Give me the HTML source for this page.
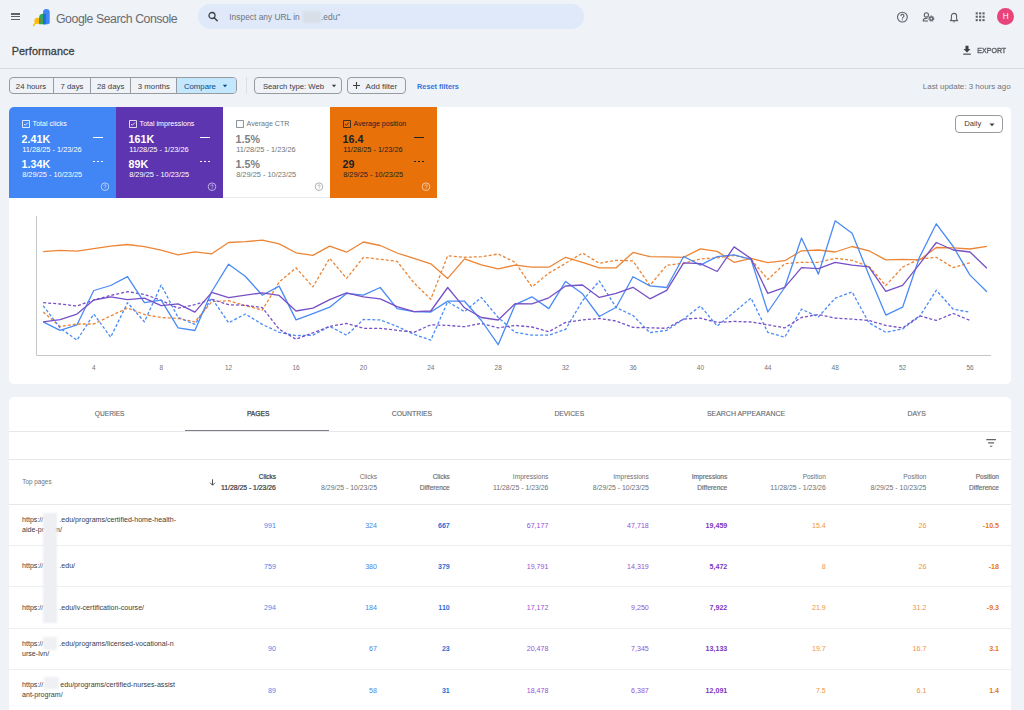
<!DOCTYPE html>
<html><head><meta charset="utf-8">
<style>
*{box-sizing:border-box;margin:0;padding:0}
html,body{width:1024px;height:710px;overflow:hidden;background:#eff2f7;font-family:"Liberation Sans",sans-serif;color:#3c4043}
.a{position:absolute;white-space:nowrap;line-height:10px}
.r{text-align:right}
.c{text-align:center}
</style></head><body>
<!-- HEADER -->
<div class="a" style="left:10.8px;top:13.2px;width:9.6px;height:8px">
 <div style="position:absolute;left:0;top:0.2px;width:9.6px;height:1.2px;background:#5f6368"></div>
 <div style="position:absolute;left:0;top:3.1px;width:9.6px;height:1.2px;background:#5f6368"></div>
 <div style="position:absolute;left:0;top:6px;width:9.6px;height:1.2px;background:#5f6368"></div>
</div>
<svg class="a" style="left:0;top:0" width="60" height="35" viewBox="0 0 60 35">
 <defs><clipPath id="gc"><rect x="39.1" y="10" width="10" height="20"/></clipPath></defs>
 <path d="M35.3,23.1 L33.6,25.7" stroke="#fbbc04" stroke-width="1.4" stroke-linecap="round"/>
 <circle cx="37.5" cy="20.8" r="3.1" fill="#fbbc04"/>
 <path d="M43.1,24.2 V12.4 A3.3,3.3 0 0 1 49.7,12.4 V22.2 A2,2 0 0 1 47.7,24.2 Z" fill="#4285f4"/>
 <path d="M39.1,23.9 V17.8 A4,4 0 0 1 43.1,13.8 H45.8 V24.2 H39.1 Z" fill="#34a853"/>
 <path d="M43.1,13.8 H45.8 V24.2 H43.1 Z" fill="#1a6fd8"/>
 <circle cx="37.5" cy="20.8" r="3.1" fill="#ea4335" clip-path="url(#gc)"/>
</svg>
<div class="a" style="left:56px;top:12.6px;font-size:12.3px;line-height:13px;letter-spacing:-0.45px;color:#686c71">Google Search Console</div>
<div class="a" style="left:198px;top:4px;width:386px;height:25px;border-radius:13px;background:#dfe9f9"></div>
<svg class="a" style="left:207px;top:11px" width="12" height="11" viewBox="0 0 12 11">
 <circle cx="5" cy="4.5" r="3" fill="none" stroke="#3c4043" stroke-width="1.3"/>
 <path d="M7.2,6.7 L10.2,9.7" stroke="#3c4043" stroke-width="1.5" stroke-linecap="round"/>
</svg>
<div class="a" style="left:229.3px;top:11.5px;font-size:8.4px;color:#6f7378">Inspect any URL in</div>
<div class="a" style="left:303px;top:11px;width:18px;height:12px;background:#d9dfe8;filter:blur(1px)"></div>
<div class="a" style="left:321px;top:11.5px;font-size:8.4px;color:#6f7378">.edu"</div>

<!-- right icons -->
<svg class="a" style="left:895px;top:9px" width="16" height="16" viewBox="0 0 16 16">
 <circle cx="7.4" cy="8.1" r="4.9" fill="none" stroke="#5f6368" stroke-width="1.1"/>
 <path d="M5.9,6.9 A1.5,1.5 0 1 1 8.2,8.1 C7.6,8.5 7.4,8.8 7.4,9.4" fill="none" stroke="#5f6368" stroke-width="1.1"/>
 <circle cx="7.4" cy="10.8" r="0.65" fill="#5f6368"/>
</svg>
<svg class="a" style="left:920px;top:9px" width="16" height="16" viewBox="0 0 16 16">
 <circle cx="6.4" cy="5.9" r="2.1" fill="none" stroke="#5f6368" stroke-width="1.1"/>
 <path d="M3.2,12.2 V11.5 C3.2,9.9 4.9,9.1 7.6,9.1" fill="none" stroke="#5f6368" stroke-width="1.1"/>
 <path d="M3.2,12.0 H8" stroke="#5f6368" stroke-width="1.1"/>
 <circle cx="11.3" cy="9.6" r="2.3" fill="none" stroke="#5f6368" stroke-width="1.5" stroke-dasharray="1.2 0.6"/>
 <circle cx="11.3" cy="9.6" r="1.5" fill="none" stroke="#5f6368" stroke-width="1.1"/>
</svg>
<svg class="a" style="left:946px;top:9px" width="16" height="16" viewBox="0 0 16 16">
 <path d="M4.3,11.6 H11.7 L10.6,10.4 V7 A2.6,2.6 0 0 0 5.4,7 V10.4 Z" fill="none" stroke="#5f6368" stroke-width="1.1" stroke-linejoin="round"/>
 <path d="M7,12.6 A1,1 0 0 0 9,12.6" fill="#5f6368"/>
</svg>
<svg class="a" style="left:972px;top:9px" width="16" height="16" viewBox="0 0 16 16" fill="#5f6368">
 <rect x="3.7" y="3.3" width="2.1" height="2.1"/><rect x="7.1" y="3.3" width="2.1" height="2.1"/><rect x="10.5" y="3.3" width="2.1" height="2.1"/>
 <rect x="3.7" y="6.7" width="2.1" height="2.1"/><rect x="7.1" y="6.7" width="2.1" height="2.1"/><rect x="10.5" y="6.7" width="2.1" height="2.1"/>
 <rect x="3.7" y="10.1" width="2.1" height="2.1"/><rect x="7.1" y="10.1" width="2.1" height="2.1"/><rect x="10.5" y="10.1" width="2.1" height="2.1"/>
</svg>
<div class="a c" style="left:997.2px;top:7.8px;width:17.2px;height:17.2px;border-radius:50%;background:#e8437b;color:#fff;font-size:8.2px;line-height:17.2px">H</div>

<!-- PERFORMANCE ROW -->
<div class="a" style="left:11.7px;top:45.4px;font-size:10.8px;letter-spacing:0.1px;line-height:13px;-webkit-text-stroke:0.3px #3c4043;color:#3c4043">Performance</div>
<svg class="a" style="left:962px;top:45px" width="10" height="11" viewBox="0 0 10 11">
 <path d="M3.5,0.8 H6.5 V4 H8.5 L5,7.6 L1.5,4 H3.5 Z" fill="#3c4043"/>
 <rect x="1.2" y="8.6" width="7.6" height="1.1" fill="#3c4043"/>
</svg>
<div class="a" style="left:977.3px;top:46px;font-size:7.05px;letter-spacing:0;-webkit-text-stroke:0.35px #5f6368;color:#5f6368;transform:scaleY(1.15);transform-origin:0 60%">EXPORT</div>
<div class="a" style="left:0;top:68px;width:1024px;height:1px;background:#dadce0"></div>

<!-- FILTER ROW -->
<div class="a" style="left:9px;top:77px;width:228px;height:17px;border:1px solid #979a9e;border-radius:4px;overflow:hidden">
 <div class="a" style="left:166px;top:0;width:61px;height:15px;background:#c2e7ff"></div>
 <div class="a" style="left:42.6px;top:0;width:1px;height:15px;background:#979a9e"></div>
 <div class="a" style="left:79.6px;top:0;width:1px;height:15px;background:#979a9e"></div>
 <div class="a" style="left:119.6px;top:0;width:1px;height:15px;background:#979a9e"></div>
 <div class="a" style="left:165.6px;top:0;width:1px;height:15px;background:#979a9e"></div>
</div>
<div class="a" style="left:15.8px;top:81.5px;font-size:7.8px;color:#3c4043">24 hours</div>
<div class="a" style="left:60.5px;top:81.5px;font-size:7.8px;color:#3c4043">7 days</div>
<div class="a" style="left:97px;top:81.5px;font-size:7.8px;color:#3c4043">28 days</div>
<div class="a" style="left:137.8px;top:81.5px;font-size:7.8px;color:#3c4043">3 months</div>
<div class="a" style="left:183.9px;top:81.5px;font-size:7.8px;color:#0b4a80">Compare</div>
<svg class="a" style="left:222px;top:84px" width="6" height="4" viewBox="0 0 6 4"><path d="M0.8,0.8 H5.2 L3,3.2 Z" fill="#0b4a80"/></svg>
<div class="a" style="left:246px;top:77px;width:1px;height:17px;background:#dcdfe3"></div>

<div class="a" style="left:254.3px;top:77.4px;width:88px;height:16.5px;border:1px solid #979a9e;border-radius:4px"></div>
<div class="a" style="left:262.9px;top:81.5px;font-size:7.72px;color:#3c4043">Search type: Web</div>
<svg class="a" style="left:331px;top:84px" width="6" height="4" viewBox="0 0 6 4"><path d="M0.8,0.8 H5.2 L3,3.2 Z" fill="#3c4043"/></svg>
<div class="a" style="left:347.1px;top:77.4px;width:58.6px;height:16.5px;border:1px solid #979a9e;border-radius:4px"></div>
<svg class="a" style="left:352px;top:81px" width="9" height="9" viewBox="0 0 9 9"><path d="M4.5,1 V8 M1,4.5 H8" stroke="#3c4043" stroke-width="1.1"/></svg>
<div class="a" style="left:365.6px;top:81.5px;font-size:8px;color:#3c4043">Add filter</div>
<div class="a" style="left:417.1px;top:81.5px;font-size:7.3px;font-weight:700;color:#2f74e0">Reset filters</div>
<div class="a" style="left:922.8px;top:81.5px;font-size:7.95px;color:#70757a">Last update: 3 hours ago</div>

<!-- CHART CARD -->
<div class="a" style="left:9px;top:107px;width:1002px;height:276.8px;background:#fff;border-radius:5px"></div>
<div class="a" style="left:9px;top:107px;width:107px;height:90.5px;background:#4285f4;border-top-left-radius:5px;"></div>
<svg class="a" style="left:21.5px;top:120.2px" width="8" height="8" viewBox="0 0 8 8"><rect x="0.6" y="0.6" width="6.8" height="6.8" fill="none" stroke="#fff" stroke-width="0.8"/><path d="M2,4 L3.3,5.3 L6,2.5" fill="none" stroke="#fff" stroke-width="0.8"/></svg>
<div class="a" style="left:32.6px;top:119px;font-size:7.1px;color:#fff">Total clicks</div>
<div class="a" style="left:21.6px;top:133.5px;font-size:10.7px;line-height:11px;font-weight:700;color:#fff">2.41K</div>
<div class="a" style="left:22.2px;top:144.5px;font-size:7.4px;color:#fff">11/28/25 - 1/23/26</div>
<div class="a" style="left:21.6px;top:159.3px;font-size:10.7px;line-height:11px;font-weight:700;color:#fff">1.34K</div>
<div class="a" style="left:22.2px;top:169.8px;font-size:7.4px;color:#fff">8/29/25 - 10/23/25</div>
<div class="a" style="left:93.2px;top:136.6px;width:10px;height:1.1px;background:#fff"></div>
<div class="a" style="left:93.2px;top:160.7px;width:10px;height:1.1px;background:repeating-linear-gradient(90deg,#fff 0 2.2px,transparent 2.2px 3.9px)"></div>
<svg class="a" style="left:100px;top:182px;opacity:0.75" width="10" height="10" viewBox="0 0 10 10"><circle cx="5" cy="4.7" r="3.8" fill="none" stroke="#fff" stroke-width="0.8"/><path d="M3.9,3.9 A1.1,1.1 0 1 1 5.6,4.8 C5.2,5.1 5,5.3 5,5.8" fill="none" stroke="#fff" stroke-width="0.8"/><circle cx="5" cy="6.8" r="0.45" fill="#fff"/></svg>
<div class="a" style="left:116px;top:107px;width:107px;height:90.5px;background:#5e35b1;"></div>
<svg class="a" style="left:128.5px;top:120.2px" width="8" height="8" viewBox="0 0 8 8"><rect x="0.6" y="0.6" width="6.8" height="6.8" fill="none" stroke="#fff" stroke-width="0.8"/><path d="M2,4 L3.3,5.3 L6,2.5" fill="none" stroke="#fff" stroke-width="0.8"/></svg>
<div class="a" style="left:139.6px;top:119px;font-size:7.1px;color:#fff">Total impressions</div>
<div class="a" style="left:128.6px;top:133.5px;font-size:10.7px;line-height:11px;font-weight:700;color:#fff">161K</div>
<div class="a" style="left:129.2px;top:144.5px;font-size:7.4px;color:#fff">11/28/25 - 1/23/26</div>
<div class="a" style="left:128.6px;top:159.3px;font-size:10.7px;line-height:11px;font-weight:700;color:#fff">89K</div>
<div class="a" style="left:129.2px;top:169.8px;font-size:7.4px;color:#fff">8/29/25 - 10/23/25</div>
<div class="a" style="left:200.2px;top:136.6px;width:10px;height:1.1px;background:#fff"></div>
<div class="a" style="left:200.2px;top:160.7px;width:10px;height:1.1px;background:repeating-linear-gradient(90deg,#fff 0 2.2px,transparent 2.2px 3.9px)"></div>
<svg class="a" style="left:207px;top:182px;opacity:0.75" width="10" height="10" viewBox="0 0 10 10"><circle cx="5" cy="4.7" r="3.8" fill="none" stroke="#fff" stroke-width="0.8"/><path d="M3.9,3.9 A1.1,1.1 0 1 1 5.6,4.8 C5.2,5.1 5,5.3 5,5.8" fill="none" stroke="#fff" stroke-width="0.8"/><circle cx="5" cy="6.8" r="0.45" fill="#fff"/></svg>
<div class="a" style="left:223px;top:107px;width:107px;height:90.5px;background:#fff;"></div>
<svg class="a" style="left:235.5px;top:120.2px" width="8" height="8" viewBox="0 0 8 8"><rect x="0.6" y="0.6" width="6.8" height="6.8" fill="none" stroke="#80868b" stroke-width="0.9"/></svg>
<div class="a" style="left:246.6px;top:119px;font-size:7.1px;color:#70757a">Average CTR</div>
<div class="a" style="left:235.6px;top:133.5px;font-size:10.7px;line-height:11px;font-weight:700;color:#7c8085">1.5%</div>
<div class="a" style="left:236.2px;top:144.5px;font-size:7.4px;color:#70757a">11/28/25 - 1/23/26</div>
<div class="a" style="left:235.6px;top:159.3px;font-size:10.7px;line-height:11px;font-weight:700;color:#7c8085">1.5%</div>
<div class="a" style="left:236.2px;top:169.8px;font-size:7.4px;color:#70757a">8/29/25 - 10/23/25</div>
<svg class="a" style="left:314px;top:182px;opacity:1" width="10" height="10" viewBox="0 0 10 10"><circle cx="5" cy="4.7" r="3.8" fill="none" stroke="#9aa0a6" stroke-width="0.8"/><path d="M3.9,3.9 A1.1,1.1 0 1 1 5.6,4.8 C5.2,5.1 5,5.3 5,5.8" fill="none" stroke="#9aa0a6" stroke-width="0.8"/><circle cx="5" cy="6.8" r="0.45" fill="#9aa0a6"/></svg>
<div class="a" style="left:330px;top:107px;width:107px;height:90.5px;background:#e8710a;"></div>
<svg class="a" style="left:342.5px;top:120.2px" width="8" height="8" viewBox="0 0 8 8"><rect x="0.6" y="0.6" width="6.8" height="6.8" fill="none" stroke="#202124" stroke-width="0.8"/><path d="M2,4 L3.3,5.3 L6,2.5" fill="none" stroke="#202124" stroke-width="0.8"/></svg>
<div class="a" style="left:353.6px;top:119px;font-size:7.1px;color:#202124">Average position</div>
<div class="a" style="left:342.6px;top:133.5px;font-size:10.7px;line-height:11px;font-weight:700;color:#202124">16.4</div>
<div class="a" style="left:343.2px;top:144.5px;font-size:7.4px;color:#202124">11/28/25 - 1/23/26</div>
<div class="a" style="left:342.6px;top:159.3px;font-size:10.7px;line-height:11px;font-weight:700;color:#202124">29</div>
<div class="a" style="left:343.2px;top:169.8px;font-size:7.4px;color:#202124">8/29/25 - 10/23/25</div>
<div class="a" style="left:414.2px;top:136.6px;width:10px;height:1.1px;background:#202124"></div>
<div class="a" style="left:414.2px;top:160.7px;width:10px;height:1.1px;background:repeating-linear-gradient(90deg,#202124 0 2.2px,transparent 2.2px 3.9px)"></div>
<svg class="a" style="left:421px;top:182px;opacity:0.75" width="10" height="10" viewBox="0 0 10 10"><circle cx="5" cy="4.7" r="3.8" fill="none" stroke="#fff" stroke-width="0.8"/><path d="M3.9,3.9 A1.1,1.1 0 1 1 5.6,4.8 C5.2,5.1 5,5.3 5,5.8" fill="none" stroke="#fff" stroke-width="0.8"/><circle cx="5" cy="6.8" r="0.45" fill="#fff"/></svg>
<div class="a" style="left:223px;top:197px;width:107px;height:1px;background:#e8eaed"></div>
<div class="a" style="left:954.8px;top:115.2px;width:48px;height:17.6px;border:1px solid #979a9e;border-radius:4px"></div>
<div class="a" style="left:964.2px;top:119px;font-size:7.7px;color:#3c4043">Daily</div>
<svg class="a" style="left:989px;top:122.5px" width="6" height="4" viewBox="0 0 6 4"><path d="M0.5,0.6 H5.5 L3,3.3 Z" fill="#3c4043"/></svg>
<svg class="a" style="left:0;top:0" width="1024" height="390" viewBox="0 0 1024 390">
<path d="M36.5,216 V355.5 H991" fill="none" stroke="#c4c7c9" stroke-width="1"/>
<polyline points="43.2,312.0 60.1,326.4 77.0,324.0 93.8,324.0 110.7,315.9 127.5,308.0 144.4,314.5 161.2,317.5 178.1,318.5 194.9,321.8 211.8,301.7 228.6,300.7 245.5,305.7 262.3,310.2 279.2,282.0 296.0,267.8 312.9,286.9 329.7,258.3 346.6,278.4 363.4,257.3 380.2,259.3 397.1,261.3 414.0,283.0 430.8,299.2 447.7,255.8 464.5,257.3 481.4,256.7 498.2,254.0 515.1,262.3 531.9,286.9 548.8,273.1 565.6,263.3 582.5,253.0 599.3,263.3 616.2,260.3 633.0,260.9 649.9,285.5 666.7,265.2 683.6,263.3 700.4,258.9 717.2,257.9 734.1,255.4 751.0,259.3 767.8,279.4 784.7,263.8 801.5,262.3 818.4,262.3 835.2,258.3 852.1,260.3 868.9,266.5 885.8,285.5 902.6,267.2 919.5,258.9 936.3,257.3 953.2,267.6 970.0,262.8" fill="none" stroke="#ec8535" stroke-width="1.3" stroke-dasharray="3 2" stroke-linejoin="round"/>
<polyline points="43.2,305.7 60.1,328.0 77.0,340.2 93.8,314.1 110.7,337.2 127.5,302.7 144.4,321.8 161.2,285.0 178.1,317.5 194.9,324.4 211.8,298.2 228.6,322.8 245.5,314.0 262.3,324.4 279.2,332.3 296.0,335.6 312.9,335.2 329.7,326.4 346.6,335.2 363.4,319.5 380.2,319.9 397.1,326.4 414.0,334.3 430.8,340.2 447.7,301.7 464.5,311.6 481.4,297.4 498.2,317.5 515.1,332.3 531.9,335.2 548.8,335.2 565.6,329.3 582.5,300.7 599.3,281.0 616.2,307.6 633.0,315.5 649.9,332.7 666.7,330.3 683.6,319.1 700.4,306.0 717.2,326.0 734.1,312.2 751.0,298.0 767.8,332.3 784.7,337.2 801.5,309.2 818.4,316.9 835.2,298.2 852.1,291.9 868.9,322.8 885.8,332.3 902.6,328.9 919.5,316.5 936.3,290.3 953.2,309.2 970.0,312.2" fill="none" stroke="#4a8bf5" stroke-width="1.3" stroke-dasharray="3 2" stroke-linejoin="round"/>
<polyline points="43.2,302.7 60.1,304.0 77.0,306.0 93.8,300.0 110.7,295.4 127.5,291.7 144.4,294.4 161.2,300.3 178.1,308.2 194.9,304.7 211.8,299.3 228.6,304.7 245.5,305.3 262.3,307.6 279.2,329.3 296.0,339.2 312.9,332.8 329.7,326.4 346.6,323.4 363.4,328.3 380.2,328.3 397.1,330.3 414.0,332.3 430.8,324.8 447.7,325.4 464.5,326.7 481.4,323.4 498.2,327.8 515.1,325.4 531.9,327.0 548.8,331.7 565.6,322.4 582.5,319.9 599.3,318.5 616.2,321.0 633.0,327.4 649.9,327.8 666.7,328.3 683.6,319.1 700.4,318.1 717.2,322.4 734.1,321.4 751.0,322.0 767.8,324.8 784.7,327.9 801.5,317.5 818.4,314.5 835.2,318.1 852.1,319.1 868.9,320.5 885.8,325.4 902.6,327.9 919.5,315.9 936.3,320.4 953.2,313.5 970.0,320.4" fill="none" stroke="#7650c6" stroke-width="1.3" stroke-dasharray="3 2" stroke-linejoin="round"/>
<polyline points="43.2,251.6 60.1,250.4 77.0,251.2 93.8,248.7 110.7,246.1 127.5,244.5 144.4,246.7 161.2,250.2 178.1,254.8 194.9,251.8 211.8,253.8 228.6,242.5 245.5,241.6 262.3,240.2 279.2,243.9 296.0,252.8 312.9,255.4 329.7,246.1 346.6,252.2 363.4,242.0 380.2,245.5 397.1,253.0 414.0,258.3 430.8,263.8 447.7,278.4 464.5,258.9 481.4,264.8 498.2,268.8 515.1,265.2 531.9,267.2 548.8,267.2 565.6,257.3 582.5,262.3 599.3,267.8 616.2,267.8 633.0,252.4 649.9,256.7 666.7,256.9 683.6,257.3 700.4,248.9 717.2,251.4 734.1,262.3 751.0,258.3 767.8,262.7 784.7,260.7 801.5,250.8 818.4,250.0 835.2,252.0 852.1,246.5 868.9,250.8 885.8,259.9 902.6,259.3 919.5,259.9 936.3,247.5 953.2,247.9 970.0,249.0 986.9,246.3" fill="none" stroke="#ec8535" stroke-width="1.3" stroke-linejoin="round"/>
<polyline points="43.2,321.8 60.1,330.3 77.0,324.8 93.8,290.5 110.7,285.5 127.5,276.7 144.4,302.7 161.2,300.1 178.1,327.8 194.9,330.5 211.8,291.5 228.6,264.2 245.5,276.5 262.3,295.2 279.2,286.1 296.0,319.9 312.9,313.6 329.7,307.2 346.6,293.4 363.4,295.2 380.2,287.5 397.1,308.6 414.0,311.6 430.8,312.0 447.7,301.1 464.5,301.2 481.4,320.5 498.2,344.7 515.1,304.7 531.9,296.8 548.8,308.6 565.6,281.4 582.5,293.8 599.3,316.5 616.2,307.2 633.0,276.7 649.9,285.9 666.7,287.5 683.6,256.5 700.4,265.2 717.2,256.7 734.1,254.8 751.0,259.3 767.8,312.0 784.7,287.5 801.5,238.0 818.4,274.1 835.2,220.8 852.1,233.3 868.9,275.1 885.8,315.1 902.6,307.2 919.5,257.3 936.3,223.8 953.2,246.5 970.0,275.1 986.9,291.8" fill="none" stroke="#4a8bf5" stroke-width="1.3" stroke-linejoin="round"/>
<polyline points="43.2,321.8 60.1,319.7 77.0,314.1 93.8,300.1 110.7,296.8 127.5,299.7 144.4,298.2 161.2,305.7 178.1,303.9 194.9,312.2 211.8,292.4 228.6,297.6 245.5,295.2 262.3,292.8 279.2,295.4 296.0,311.0 312.9,308.2 329.7,299.7 346.6,292.8 363.4,296.8 380.2,298.8 397.1,306.6 414.0,311.6 430.8,311.0 447.7,287.5 464.5,307.8 481.4,317.5 498.2,320.0 515.1,303.7 531.9,303.9 548.8,297.8 565.6,286.0 582.5,285.0 599.3,297.4 616.2,293.4 633.0,287.3 649.9,298.8 666.7,290.3 683.6,262.9 700.4,263.6 717.2,271.5 734.1,246.9 751.0,258.6 767.8,293.4 784.7,287.3 801.5,267.6 818.4,268.6 835.2,262.3 852.1,265.2 868.9,266.8 885.8,291.3 902.6,285.3 919.5,264.2 936.3,242.5 953.2,250.0 970.0,252.0 986.9,268.2" fill="none" stroke="#7650c6" stroke-width="1.3" stroke-linejoin="round"/>
<text x="93.8" y="370.2" font-size="6.5" fill="#70757a" text-anchor="middle" font-family="Liberation Sans">4</text>
<text x="161.2" y="370.2" font-size="6.5" fill="#70757a" text-anchor="middle" font-family="Liberation Sans">8</text>
<text x="228.6" y="370.2" font-size="6.5" fill="#70757a" text-anchor="middle" font-family="Liberation Sans">12</text>
<text x="296.0" y="370.2" font-size="6.5" fill="#70757a" text-anchor="middle" font-family="Liberation Sans">16</text>
<text x="363.4" y="370.2" font-size="6.5" fill="#70757a" text-anchor="middle" font-family="Liberation Sans">20</text>
<text x="430.8" y="370.2" font-size="6.5" fill="#70757a" text-anchor="middle" font-family="Liberation Sans">24</text>
<text x="498.2" y="370.2" font-size="6.5" fill="#70757a" text-anchor="middle" font-family="Liberation Sans">28</text>
<text x="565.6" y="370.2" font-size="6.5" fill="#70757a" text-anchor="middle" font-family="Liberation Sans">32</text>
<text x="633.0" y="370.2" font-size="6.5" fill="#70757a" text-anchor="middle" font-family="Liberation Sans">36</text>
<text x="700.4" y="370.2" font-size="6.5" fill="#70757a" text-anchor="middle" font-family="Liberation Sans">40</text>
<text x="767.8" y="370.2" font-size="6.5" fill="#70757a" text-anchor="middle" font-family="Liberation Sans">44</text>
<text x="835.2" y="370.2" font-size="6.5" fill="#70757a" text-anchor="middle" font-family="Liberation Sans">48</text>
<text x="902.6" y="370.2" font-size="6.5" fill="#70757a" text-anchor="middle" font-family="Liberation Sans">52</text>
<text x="970.0" y="370.2" font-size="6.5" fill="#70757a" text-anchor="middle" font-family="Liberation Sans">56</text>
</svg>

<!-- TABLE CARD -->
<div class="a" style="left:9px;top:397px;width:1002px;height:330px;background:#fff;border-radius:5px"></div>
<div class="a c" style="left:49.7px;top:408.5px;width:120px;font-size:6.6px;-webkit-text-stroke:0.12px #65696e;font-weight:400;color:#65696e">QUERIES</div>
<div class="a c" style="left:198.2px;top:408.5px;width:120px;font-size:6.7px;-webkit-text-stroke:0.25px #3c4043;font-weight:400;color:#3c4043">PAGES</div>
<div class="a c" style="left:352px;top:408.5px;width:120px;font-size:6.86px;-webkit-text-stroke:0.12px #65696e;font-weight:400;color:#65696e">COUNTRIES</div>
<div class="a c" style="left:509.29999999999995px;top:408.5px;width:120px;font-size:6.77px;-webkit-text-stroke:0.12px #65696e;font-weight:400;color:#65696e">DEVICES</div>
<div class="a c" style="left:686px;top:408.5px;width:120px;font-size:6.97px;-webkit-text-stroke:0.12px #65696e;font-weight:400;color:#65696e">SEARCH APPEARANCE</div>
<div class="a c" style="left:856.7px;top:408.5px;width:120px;font-size:6.94px;-webkit-text-stroke:0.12px #65696e;font-weight:400;color:#65696e">DAYS</div>
<div class="a" style="left:9px;top:431px;width:1002px;height:1px;background:#e6e8eb"></div>
<div class="a" style="left:185px;top:429.8px;width:143.7px;height:1.6px;background:#7a7e83"></div>
<svg class="a" style="left:985px;top:438px" width="12" height="10" viewBox="0 0 12 10"><path d="M1.3,1.6 H10.9 M3.1,4.9 H9.1 M4.9,8.2 H7.3" stroke="#5f6368" stroke-width="1.1"/></svg>
<div class="a" style="left:9px;top:459px;width:1002px;height:1px;background:#e6e8eb"></div>
<div class="a" style="left:22.3px;top:477px;font-size:6.35px;color:#70757a">Top pages</div>
<svg class="a" style="left:209px;top:478.5px" width="7" height="7" viewBox="0 0 7 7"><path d="M3.5,0.3 V6.2 M1,3.7 L3.5,6.2 L6,3.7" fill="none" stroke="#3c4043" stroke-width="0.9"/></svg>
<div class="a r" style="left:175.90000000000003px;top:471.9px;width:100px;font-size:6.4px;-webkit-text-stroke:0.22px #3c4043;font-weight:400;color:#3c4043">Clicks</div>
<div class="a r" style="left:175.90000000000003px;top:483px;width:100px;font-size:6.83px;-webkit-text-stroke:0.22px #3c4043;font-weight:400;color:#3c4043">11/28/25 - 1/23/26</div>
<div class="a r" style="left:277.0px;top:471.9px;width:100px;font-size:6.5px;font-weight:400;color:#6b6f74">Clicks</div>
<div class="a r" style="left:277.0px;top:483px;width:100px;font-size:6.9px;font-weight:400;color:#6b6f74">8/29/25 - 10/23/25</div>
<div class="a r" style="left:349.8px;top:471.9px;width:100px;font-size:6.4px;-webkit-text-stroke:0.18px #6b6f74;font-weight:400;color:#6b6f74">Clicks</div>
<div class="a r" style="left:349.8px;top:483px;width:100px;font-size:6.6px;-webkit-text-stroke:0.18px #6b6f74;font-weight:400;color:#6b6f74">Difference</div>
<div class="a r" style="left:448.40000000000003px;top:471.9px;width:100px;font-size:6.6px;font-weight:400;color:#6b6f74">Impressions</div>
<div class="a r" style="left:448.40000000000003px;top:483px;width:100px;font-size:6.9px;font-weight:400;color:#6b6f74">11/28/25 - 1/23/26</div>
<div class="a r" style="left:548.8px;top:471.9px;width:100px;font-size:6.6px;font-weight:400;color:#6b6f74">Impressions</div>
<div class="a r" style="left:548.8px;top:483px;width:100px;font-size:6.9px;font-weight:400;color:#6b6f74">8/29/25 - 10/23/25</div>
<div class="a r" style="left:627.3px;top:471.9px;width:100px;font-size:6.6px;-webkit-text-stroke:0.18px #6b6f74;font-weight:400;color:#6b6f74">Impressions</div>
<div class="a r" style="left:627.3px;top:483px;width:100px;font-size:6.6px;-webkit-text-stroke:0.18px #6b6f74;font-weight:400;color:#6b6f74">Difference</div>
<div class="a r" style="left:725.8px;top:471.9px;width:100px;font-size:6.5px;font-weight:400;color:#6b6f74">Position</div>
<div class="a r" style="left:725.8px;top:483px;width:100px;font-size:6.9px;font-weight:400;color:#6b6f74">11/28/25 - 1/23/26</div>
<div class="a r" style="left:826.4px;top:471.9px;width:100px;font-size:6.5px;font-weight:400;color:#6b6f74">Position</div>
<div class="a r" style="left:826.4px;top:483px;width:100px;font-size:6.9px;font-weight:400;color:#6b6f74">8/29/25 - 10/23/25</div>
<div class="a r" style="left:899.0px;top:471.9px;width:100px;font-size:6.55px;-webkit-text-stroke:0.18px #6b6f74;font-weight:400;color:#6b6f74">Position</div>
<div class="a r" style="left:899.0px;top:483px;width:100px;font-size:6.6px;-webkit-text-stroke:0.18px #6b6f74;font-weight:400;color:#6b6f74">Difference</div>
<div class="a" style="left:9px;top:504px;width:1002px;height:1px;background:#e6e8eb"></div>
<div class="a" style="left:9px;top:545.2px;width:1002px;height:1px;background:#eceef0"></div>
<div class="a" style="left:9px;top:586.3px;width:1002px;height:1px;background:#eceef0"></div>
<div class="a" style="left:9px;top:627.5px;width:1002px;height:1px;background:#eceef0"></div>
<div class="a" style="left:9px;top:668.8px;width:1002px;height:1px;background:#eceef0"></div>
<div class="a" style="left:22px;top:514.7px;font-size:7.1px;line-height:10.6px;color:#3c4043">https://<span style="display:inline-block;width:16px"></span>.edu/programs/certified-home-health-<br>aide-pr<span style="display:inline-block;width:10px"></span>m/</div>
<div class="a r" style="left:195.90000000000003px;top:520.5px;width:80px;font-size:7.1px;font-weight:400;color:#4a86ea">991</div>
<div class="a r" style="left:297.0px;top:520.5px;width:80px;font-size:7.1px;font-weight:400;color:#4a86ea">324</div>
<div class="a r" style="left:369.8px;top:520.5px;width:80px;font-size:7.1px;font-weight:700;color:#2b6fd6">667</div>
<div class="a r" style="left:468.4px;top:520.5px;width:80px;font-size:7.1px;font-weight:400;color:#9653d2">67,177</div>
<div class="a r" style="left:568.8px;top:520.5px;width:80px;font-size:7.1px;font-weight:400;color:#9653d2">47,718</div>
<div class="a r" style="left:647.3px;top:520.5px;width:80px;font-size:7.1px;font-weight:700;color:#7b35c0">19,459</div>
<div class="a r" style="left:745.8px;top:520.5px;width:80px;font-size:7.1px;font-weight:400;color:#ef9445">15.4</div>
<div class="a r" style="left:846.4px;top:520.5px;width:80px;font-size:7.1px;font-weight:400;color:#ef9445">26</div>
<div class="a r" style="left:919.0px;top:520.5px;width:80px;font-size:7.1px;font-weight:700;color:#e8780e">-10.5</div>
<div class="a" style="left:22px;top:561.3px;font-size:7.1px;color:#3c4043">https://<span style="display:inline-block;width:16px"></span>.edu/</div>
<div class="a r" style="left:195.90000000000003px;top:561.8px;width:80px;font-size:7.1px;font-weight:400;color:#4a86ea">759</div>
<div class="a r" style="left:297.0px;top:561.8px;width:80px;font-size:7.1px;font-weight:400;color:#4a86ea">380</div>
<div class="a r" style="left:369.8px;top:561.8px;width:80px;font-size:7.1px;font-weight:700;color:#2b6fd6">379</div>
<div class="a r" style="left:468.4px;top:561.8px;width:80px;font-size:7.1px;font-weight:400;color:#9653d2">19,791</div>
<div class="a r" style="left:568.8px;top:561.8px;width:80px;font-size:7.1px;font-weight:400;color:#9653d2">14,319</div>
<div class="a r" style="left:647.3px;top:561.8px;width:80px;font-size:7.1px;font-weight:700;color:#7b35c0">5,472</div>
<div class="a r" style="left:745.8px;top:561.8px;width:80px;font-size:7.1px;font-weight:400;color:#ef9445">8</div>
<div class="a r" style="left:846.4px;top:561.8px;width:80px;font-size:7.1px;font-weight:400;color:#ef9445">26</div>
<div class="a r" style="left:919.0px;top:561.8px;width:80px;font-size:7.1px;font-weight:700;color:#e8780e">-18</div>
<div class="a" style="left:22px;top:602.6px;font-size:7.1px;color:#3c4043">https://<span style="display:inline-block;width:16px"></span>.edu/iv-certification-course/</div>
<div class="a r" style="left:195.90000000000003px;top:603.1px;width:80px;font-size:7.1px;font-weight:400;color:#4a86ea">294</div>
<div class="a r" style="left:297.0px;top:603.1px;width:80px;font-size:7.1px;font-weight:400;color:#4a86ea">184</div>
<div class="a r" style="left:369.8px;top:603.1px;width:80px;font-size:7.1px;font-weight:700;color:#2b6fd6">110</div>
<div class="a r" style="left:468.4px;top:603.1px;width:80px;font-size:7.1px;font-weight:400;color:#9653d2">17,172</div>
<div class="a r" style="left:568.8px;top:603.1px;width:80px;font-size:7.1px;font-weight:400;color:#9653d2">9,250</div>
<div class="a r" style="left:647.3px;top:603.1px;width:80px;font-size:7.1px;font-weight:700;color:#7b35c0">7,922</div>
<div class="a r" style="left:745.8px;top:603.1px;width:80px;font-size:7.1px;font-weight:400;color:#ef9445">21.9</div>
<div class="a r" style="left:846.4px;top:603.1px;width:80px;font-size:7.1px;font-weight:400;color:#ef9445">31.2</div>
<div class="a r" style="left:919.0px;top:603.1px;width:80px;font-size:7.1px;font-weight:700;color:#e8780e">-9.3</div>
<div class="a" style="left:22px;top:638.5px;font-size:7.1px;line-height:10.6px;color:#3c4043">https://<span style="display:inline-block;width:16px"></span>.edu/programs/licensed-vocational-n<br>urse-lvn/</div>
<div class="a r" style="left:195.90000000000003px;top:644.3px;width:80px;font-size:7.1px;font-weight:400;color:#4a86ea">90</div>
<div class="a r" style="left:297.0px;top:644.3px;width:80px;font-size:7.1px;font-weight:400;color:#4a86ea">67</div>
<div class="a r" style="left:369.8px;top:644.3px;width:80px;font-size:7.1px;font-weight:700;color:#2b6fd6">23</div>
<div class="a r" style="left:468.4px;top:644.3px;width:80px;font-size:7.1px;font-weight:400;color:#9653d2">20,478</div>
<div class="a r" style="left:568.8px;top:644.3px;width:80px;font-size:7.1px;font-weight:400;color:#9653d2">7,345</div>
<div class="a r" style="left:647.3px;top:644.3px;width:80px;font-size:7.1px;font-weight:700;color:#7b35c0">13,133</div>
<div class="a r" style="left:745.8px;top:644.3px;width:80px;font-size:7.1px;font-weight:400;color:#ef9445">19.7</div>
<div class="a r" style="left:846.4px;top:644.3px;width:80px;font-size:7.1px;font-weight:400;color:#ef9445">16.7</div>
<div class="a r" style="left:919.0px;top:644.3px;width:80px;font-size:7.1px;font-weight:700;color:#e8780e">3.1</div>
<div class="a" style="left:22px;top:679.9000000000001px;font-size:7.1px;line-height:10.6px;color:#3c4043">https://<span style="display:inline-block;width:17px"></span>edu/programs/certified-nurses-assist<br>ant-program/</div>
<div class="a r" style="left:195.90000000000003px;top:685.7px;width:80px;font-size:7.1px;font-weight:400;color:#4a86ea">89</div>
<div class="a r" style="left:297.0px;top:685.7px;width:80px;font-size:7.1px;font-weight:400;color:#4a86ea">58</div>
<div class="a r" style="left:369.8px;top:685.7px;width:80px;font-size:7.1px;font-weight:700;color:#2b6fd6">31</div>
<div class="a r" style="left:468.4px;top:685.7px;width:80px;font-size:7.1px;font-weight:400;color:#9653d2">18,478</div>
<div class="a r" style="left:568.8px;top:685.7px;width:80px;font-size:7.1px;font-weight:400;color:#9653d2">6,387</div>
<div class="a r" style="left:647.3px;top:685.7px;width:80px;font-size:7.1px;font-weight:700;color:#7b35c0">12,091</div>
<div class="a r" style="left:745.8px;top:685.7px;width:80px;font-size:7.1px;font-weight:400;color:#ef9445">7.5</div>
<div class="a r" style="left:846.4px;top:685.7px;width:80px;font-size:7.1px;font-weight:400;color:#ef9445">6.1</div>
<div class="a r" style="left:919.0px;top:685.7px;width:80px;font-size:7.1px;font-weight:700;color:#e8780e">1.4</div>
<div class="a" style="left:43.4px;top:513px;width:13.7px;height:110px;background:#edeff2;filter:blur(0.8px)"></div>
<div class="a" style="left:43.4px;top:637px;width:13.7px;height:13px;background:#eef0f3;filter:blur(0.8px)"></div>
<div class="a" style="left:44.3px;top:677px;width:14.6px;height:12.3px;background:#eef0f3;filter:blur(0.8px)"></div>

</body></html>
